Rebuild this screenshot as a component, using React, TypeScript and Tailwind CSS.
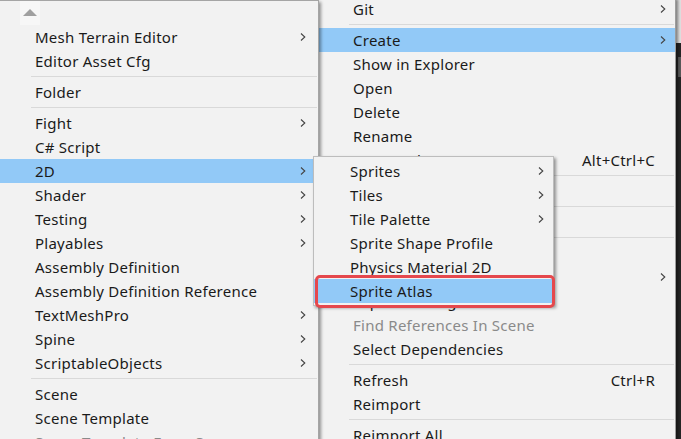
type Item = {
  label?: string;
  sub?: boolean;
  sep?: boolean;
  active?: boolean;
  disabled?: boolean;
  shortcut?: string;
};

const leftItems: Item[] = [
  { label: 'Mesh Terrain Editor', sub: true },
  { label: 'Editor Asset Cfg' },
  { sep: true },
  { label: 'Folder' },
  { sep: true },
  { label: 'Fight', sub: true },
  { label: 'C# Script' },
  { label: '2D', sub: true, active: true },
  { label: 'Shader', sub: true },
  { label: 'Testing', sub: true },
  { label: 'Playables', sub: true },
  { label: 'Assembly Definition' },
  { label: 'Assembly Definition Reference' },
  { label: 'TextMeshPro', sub: true },
  { label: 'Spine', sub: true },
  { label: 'ScriptableObjects', sub: true },
  { sep: true },
  { label: 'Scene' },
  { label: 'Scene Template' },
  { label: 'Scene Template From Scene', disabled: true },
];

const rightItems: Item[] = [
  { label: 'Git', sub: true },
  { sep: true },
  { label: 'Create', sub: true, active: true },
  { label: 'Show in Explorer' },
  { label: 'Open' },
  { label: 'Delete' },
  { label: 'Rename' },
  { label: 'Copy Path', shortcut: 'Alt+Ctrl+C' },
  { sep: true },
  { label: 'Open Scene Additive', disabled: true },
  { sep: true },
  { label: 'View in Package Manager', disabled: true },
  { sep: true },
  { label: 'Import New Asset...' },
  { label: 'Import Package', sub: true },
  { label: 'Export Package...' },
  { label: 'Find References In Scene', disabled: true },
  { label: 'Select Dependencies' },
  { sep: true },
  { label: 'Refresh', shortcut: 'Ctrl+R' },
  { label: 'Reimport' },
  { sep: true },
  { label: 'Reimport All' },
];

const twoDItems: Item[] = [
  { label: 'Sprites', sub: true },
  { label: 'Tiles', sub: true },
  { label: 'Tile Palette', sub: true },
  { label: 'Sprite Shape Profile' },
  { label: 'Physics Material 2D' },
  { label: 'Sprite Atlas', active: true },
];

function Chevron() {
  return (
    <svg width="6" height="10" viewBox="0 0 6 10" className="block">
      <path d="M1 1.5 L4.8 5 L1 8.5" fill="none" stroke="#444" strokeWidth="1.1" />
    </svg>
  );
}

function Separator() {
  return (
    <div className="h-[7px] flex items-center pl-[31px] pr-[1px]">
      <div className="h-px w-full bg-[#d9d9d9]" />
    </div>
  );
}

function Row({ item, padLeft = 'pl-[35px]', padRight }: { item: Item; padLeft?: string; padRight: string }) {
  return (
    <div
      className={`h-6 flex items-center ${padLeft} ${padRight} ${item.active ? 'bg-[#92c9f7]' : ''} ${
        item.disabled ? 'text-[#8a8a8a]' : 'text-[#1a1a1a]'
      }`}
    >
      <span className="flex-1 whitespace-nowrap">{item.label}</span>
      {item.shortcut && <span className="whitespace-nowrap">{item.shortcut}</span>}
      <span className="w-[11px] flex justify-end">{item.sub && <Chevron />}</span>
    </div>
  );
}

export default function App() {
  return (
    <div className="relative w-[681px] h-[439px] overflow-hidden bg-[#252525] font-['Noto_Sans',sans-serif] text-[15px] leading-6 tracking-[0.25px]">
      {/* editor strip peeking out on the right */}
      <div className="absolute left-[676px] top-0 w-[5px] h-[43px] bg-[#e2e2e2]" />
      <div className="absolute left-[678px] top-[57px] w-[3px] h-[20px] bg-[#5a5a5a]" />

      {/* parent context menu */}
      <div className="absolute left-[318px] top-[-3px] w-[358px] h-[460px] bg-[#f2f2f2] border-r border-[#9d9d9d] shadow-[2px_2px_3px_rgba(0,0,0,0.45)]">
        {rightItems.map((it, i) =>
          it.sep ? <Separator key={i} /> : <Row key={i} item={it} padRight="pr-[9px]" />
        )}
      </div>

      {/* Create menu */}
      <div className="absolute left-0 top-0 w-[319px] h-[460px] bg-[#f2f2f2] border-t border-r border-[#a5a5a5] shadow-[2px_2px_3px_rgba(0,0,0,0.4)]">
        <div className="h-6 pl-[20px]">
          <div className="w-[20px] h-6 bg-[#f7f7f7] flex items-center justify-center">
            <svg width="14" height="7" viewBox="0 0 14 7" className="block -mt-[2px]">
              <path d="M0 7 L7 0 L14 7 Z" fill="#a0a0a0" />
            </svg>
          </div>
        </div>
        {leftItems.map((it, i) =>
          it.sep ? <Separator key={i} /> : <Row key={i} item={it} padRight="pr-[12px]" />
        )}
      </div>

      {/* 2D submenu */}
      <div className="absolute left-[313px] top-[156px] w-[241px] py-[2px] bg-[#f2f2f2] border border-[#bdbdbd] shadow-[2px_2px_3px_rgba(0,0,0,0.4)]">
        {twoDItems.map((it, i) => (
          <Row key={i} item={it} padLeft="pl-[36px]" padRight="pr-[9px]" />
        ))}
      </div>

      {/* red annotation box */}
      <div className="absolute left-[315px] top-[275px] w-[240px] h-[33px] rounded-[5px] border-[3px] border-[#e5484d]" />
    </div>
  );
}
